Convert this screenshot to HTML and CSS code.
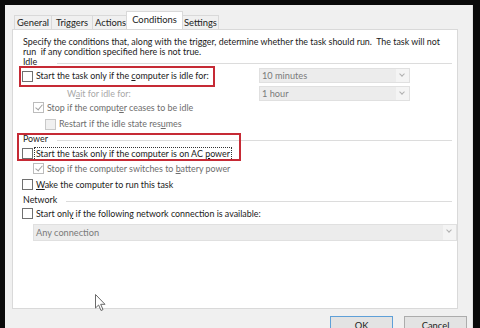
FILE: index.html
```html
<!DOCTYPE html>
<html>
<head>
<meta charset="utf-8">
<link rel="stylesheet" href="styles.css">
</head>
<body>
<div class="dialog">
  <div class="tabs">
    <div class="tab w-general">General</div>
    <div class="tab w-triggers">Triggers</div>
    <div class="tab w-actions">Actions</div>
    <div class="tab tab-active w-conditions">Conditions</div>
    <div class="tab w-settings">Settings</div>
  </div>
  <div class="panel">
    <div class="desc">Specify the conditions that, along with the trigger, determine whether the task should run.&nbsp; The task will not<br>run&nbsp; if any condition specified here is not true.</div>

    <div class="group"><span class="group-label gl-idle">Idle</span><span class="sep"></span></div>

    <div class="row row-idle">
      <div class="opt lvl0"><span class="cb"></span><span class="lbl">Start the task only if the <u>c</u>omputer is idle for:</span></div>
      <div class="combo"><span class="combo-text">10 minutes</span><span class="chev"></span></div>
    </div>
    <div class="row row-wait">
      <div class="wait-label">W<u>a</u>it for idle for:</div>
      <div class="combo"><span class="combo-text">1 hour</span><span class="chev"></span></div>
    </div>
    <div class="row row-stop">
      <div class="opt lvl1 disabled"><span class="cb cb-dis checked"></span><span class="lbl">Stop if the comput<u>e</u>r ceases to be idle</span></div>
    </div>
    <div class="row row-restart">
      <div class="opt lvl2 disabled"><span class="cb cb-dis cb-fill"></span><span class="lbl">Restart if the idle state res<u>u</u>mes</span></div>
    </div>

    <div class="group group-power"><span class="group-label gl-power">Power</span><span class="sep"></span></div>

    <div class="row row-ac">
      <div class="opt lvl0"><span class="cb"></span><span class="lbl focus">Start the task only if the computer is on AC <u>p</u>ower</span></div>
    </div>
    <div class="row row-battery">
      <div class="opt lvl1 disabled"><span class="cb cb-dis checked"></span><span class="lbl">Stop if the computer switches to <u>b</u>attery power</span></div>
    </div>
    <div class="row row-wake">
      <div class="opt lvl0"><span class="cb"></span><span class="lbl"><u>W</u>ake the computer to run this task</span></div>
    </div>

    <div class="group group-network"><span class="group-label gl-network">Network</span><span class="sep"></span></div>

    <div class="row row-net">
      <div class="opt lvl0"><span class="cb"></span><span class="lbl">Start onl<u>y</u> if the following network connection is available:</span></div>
    </div>
    <div class="combo combo-wide"><span class="combo-text">Any connection</span><span class="chev"></span></div>

    <div class="mark mark-idle"></div>
    <div class="mark mark-power"></div>
    <svg class="cursor" width="12" height="18" viewBox="0 0 12 18"><path d="M0.5 0.5 L0.5 14 L3.6 11 L6 16.5 L8 15.6 L5.7 10.3 L10 10.3 Z" fill="#ffffff" stroke="#6a6a6a" stroke-width="1" stroke-linejoin="miter"/></svg>
  </div>
  <div class="buttons">
    <div class="btn btn-default">OK</div>
    <div class="btn">Cancel</div>
  </div>
</div>
</body>
</html>
```

FILE: styles.css
```css
html, body {
  margin: 0;
  padding: 0;
  background: #0a0a0a;
}
body {
  font-family: "Lato", "Noto Sans", sans-serif;
  font-size: 8.9px;
  color: #1a1a1a;
  overflow: hidden;
  height: 328px;
}
.dialog {
  margin: 5px 7px 0 5px;
  height: 330px;
  background: #f0f0f0;
  padding-top: 7px;
  box-sizing: border-box;
  border-right: 1px solid #e0e0e0;
}
.tabs {
  display: flex;
  align-items: flex-end;
  padding-left: 9px;
  height: 17px;
}
.tab {
  height: 14px;
  line-height: 13px;
  border: 1px solid #d9d9d9;
  border-bottom: none;
  background: #f0f0f0;
  text-align: center;
  box-sizing: border-box;
  margin-right: -1px;
  color: #222;
  white-space: nowrap;
  font-size: 9.4px;
}
.w-general { width: 38px; }
.w-triggers { width: 42px; }
.w-actions { width: 37px; }
.w-settings { width: 37px; }
.tab-active {
  width: 57px;
  height: 18px;
  line-height: 15px;
  background: #fff;
  margin: 0 -1px 0 -2px;
  position: relative;
  z-index: 2;
}
.panel {
  position: relative;
  margin-left: 7px;
  width: 446px;
  height: 280px;
  box-sizing: border-box;
  background: #fff;
  border: 1px solid #d9d9d9;
  padding: 7px 0 0 9px;
}
.desc {
  line-height: 10px;
  height: 20px;
  padding-left: 1px;
  white-space: nowrap;
}
.group {
  display: flex;
  align-items: center;
  height: 10px;
  padding-left: 1px;
  padding-right: 5px;
}
.group-label {
  line-height: 10px;
  flex: none;
}
.gl-idle { width: 34px; }
.gl-power { width: 34px; }
.gl-network { width: 43px; }
.sep {
  flex: 1;
  height: 1px;
  background: #dcdcdc;
  margin-top: 2px;
}
.group-power { margin-top: 3px; }
.group-network { margin-top: 4px; }

.row {
  display: flex;
  align-items: center;
  position: relative;
}
.row-idle { height: 16px; margin-top: 1px; }
.row-wait { height: 16px; margin-top: 1px; }
.row-stop { height: 13px; }
.row-restart { height: 14px; margin-top: 3px; }
.row-ac { height: 13px; margin-top: 3px; }
.row-battery { height: 13px; margin-top: 2px; }
.row-wake { height: 13px; margin-top: 3px; }
.row-net { height: 13px; margin-top: 2px; }

.opt {
  display: flex;
  align-items: center;
  white-space: nowrap;
}
.lvl1 { margin-left: 11px; }
.lvl2 { margin-left: 23px; }
.cb {
  width: 11px;
  height: 11px;
  box-sizing: border-box;
  border: 1px solid #707070;
  background: #fff;
  margin-right: 3px;
  position: relative;
  flex: none;
}
.cb-dis {
  border-color: #bcbcbc;
}
.cb-fill {
  background: #f0f0f0;
  border-color: #c8c8c8;
}
.checked::after {
  content: "";
  position: absolute;
  left: 3px;
  top: 0px;
  width: 3px;
  height: 6px;
  border-right: 1.5px solid #a0a0a0;
  border-bottom: 1.5px solid #a0a0a0;
  transform: rotate(40deg);
}
.disabled .lbl { color: #6d6d6d; }
.lbl { line-height: 12px; }
.focus {
  outline: 1px dotted #333;
  outline-offset: 0px;
  margin-left: -1px;
  padding: 0 1px;
}
.wait-label {
  margin-left: 45px;
  color: #a8a8a8;
  white-space: nowrap;
}
.combo {
  position: absolute;
  left: 237px;
  top: 0px;
  width: 151px;
  height: 15px;
  box-sizing: border-box;
  background: #ececec;
  border: 1px solid #e0e0e0;
  display: flex;
  align-items: center;
}
.row-wait .combo { top: 1px; height: 15px; }
.combo-text {
  color: #7a7a7a;
  padding-left: 2px;
  flex: 1;
  line-height: 12px;
  font-size: 9.2px;
}
.chev {
  width: 13px;
  height: 100%;
  background: #f4f4f4;
  position: relative;
}
.chev::after {
  content: "";
  position: absolute;
  left: 4px;
  top: 3px;
  width: 3px;
  height: 3px;
  border-right: 1px solid #b0b0b0;
  border-bottom: 1px solid #b0b0b0;
  transform: rotate(45deg);
}
.combo-wide {
  position: static;
  margin-top: 4px;
  margin-left: 11px;
  width: 424px;
  height: 17px;
}
.mark {
  position: absolute;
  border: 2px solid #c62a35;
  box-sizing: border-box;
}
.mark-idle {
  left: 6px;
  top: 36px;
  width: 196px;
  height: 21px;
}
.mark-power {
  left: 4px;
  top: 103px;
  width: 224px;
  height: 28px;
}
.cursor {
  position: absolute;
  left: 82px;
  top: 264px;
}
.buttons {
  display: flex;
  justify-content: flex-end;
  gap: 11px;
  padding-right: 5px;
  margin-top: 7px;
}
.btn {
  width: 63px;
  height: 20px;
  box-sizing: border-box;
  border: 1px solid #acacac;
  background: #e3e3e3;
  text-align: center;
  line-height: 17px;
  color: #222;
  font-size: 9.4px;
}
.btn-default {
  border-color: #5fa0d8;
}
```
